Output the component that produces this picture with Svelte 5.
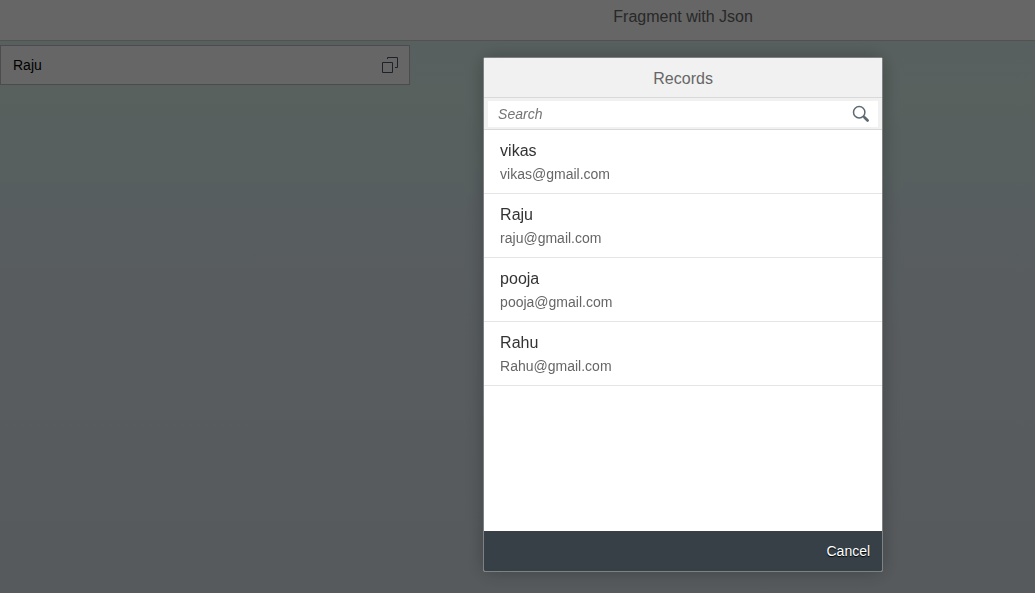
<script>
  let records = [
    { name: 'vikas', email: 'vikas@gmail.com' },
    { name: 'Raju', email: 'raju@gmail.com' },
    { name: 'pooja', email: 'pooja@gmail.com' },
    { name: 'Rahu', email: 'Rahu@gmail.com' }
  ]

  let selected = 'Raju'
  let query = ''
  let open = true

  $: visible = records.filter((r) => r.name.toLowerCase().includes(query.toLowerCase()))

  function pick(record) {
    selected = record.name
    open = false
  }
</script>

<div class="page">
  <header class="bar">
    <h1>Fragment with Json</h1>
  </header>

  <div class="value-help">
    <input type="text" aria-label="Record" bind:value={selected} />
    <button aria-label="Choose record" on:click={() => (open = true)}>
      <svg width="18" height="18" viewBox="0 0 18 18" fill="none" stroke="currentColor">
        <path d="M1.5 6.5h10v10h-10z" />
        <path d="M6.5 3V1.5h10v10H14" />
      </svg>
    </button>
  </div>
</div>

{#if open}
  <div class="scrim">
    <div class="dialog" role="dialog" aria-modal="true" aria-labelledby="dialog-title">
      <h2 id="dialog-title">Records</h2>

      <div class="subheader">
        <div class="search">
          <input type="text" aria-label="Search" placeholder="Search" bind:value={query} />
          <button aria-label="Search">
            <svg width="18" height="18" viewBox="0 0 18 18" fill="none" stroke="currentColor">
              <circle cx="7.2" cy="7.2" r="5.7" stroke-width="1.5" />
              <path d="M11 11l1.5 1.5" stroke-width="1.5" />
              <path d="M12.6 12.6l3 2.8" stroke-width="2.8" stroke-linecap="round" />
            </svg>
          </button>
        </div>
      </div>

      <ul>
        {#each visible as record}
          <li>
            <button class="item" on:click={() => pick(record)}>
              <span class="name">{record.name}</span>
              <span class="email">{record.email}</span>
            </button>
          </li>
        {/each}
      </ul>

      <footer>
        <button on:click={() => (open = false)}>Cancel</button>
      </footer>
    </div>
  </div>
{/if}

<style>
  :global(body) {
    margin: 0;
    font-family: 'Liberation Sans', Arial, sans-serif;
  }
  button,
  input {
    box-sizing: border-box;
    margin: 0;
    padding: 0;
    border: 0;
    background: none;
    font-family: inherit;
    outline: none;
  }
  svg {
    display: block;
  }
  h1,
  h2 {
    margin: 0;
    font-size: 16px;
    font-weight: 400;
    text-align: center;
  }
  .page {
    min-height: 100vh;
    background: linear-gradient(#dcf0f0 0, #dcf2ec 16%, #d9edee 30%, #dce8ee 40%, #d9e1e6 100%);
  }
  .bar {
    padding: 0 0 6px 32%;
    border-bottom: 1px solid #ccc;
    background: #fff;
  }
  .bar h1 {
    line-height: 34px;
    color: #666;
  }
  .value-help {
    box-sizing: border-box;
    display: flex;
    max-width: 410px;
    height: 40px;
    margin-top: 4px;
    border: 1px solid #bfbfbf;
    background: #fff;
  }
  .value-help input {
    flex: 1;
    min-width: 0;
    padding: 0 12px;
    font-size: 14px;
    color: #000;
  }
  .value-help button {
    display: grid;
    place-items: center;
    width: 38px;
    color: #4a5568;
  }
  .scrim {
    position: fixed;
    inset: 0;
    box-sizing: border-box;
    display: flex;
    justify-content: center;
    padding: 57px 0 21px 32%;
    background: rgba(0, 0, 0, 0.6);
  }
  .dialog {
    box-sizing: border-box;
    display: flex;
    flex-direction: column;
    width: 400px;
    border: 1px solid #7d8283;
    border-radius: 2px;
    overflow: hidden;
    background: #fff;
    box-shadow: 0 0 20px rgba(0, 0, 0, 0.25);
  }
  .dialog h2 {
    padding-top: 2px;
    line-height: 37px;
    border-bottom: 1px solid #d9d9d9;
    background: #f1f1f1;
    color: #666;
  }
  .subheader {
    padding: 3px 4px 2px;
    border-bottom: 1px solid #d9d9d9;
    background: #f1f1f1;
  }
  .search {
    display: flex;
    height: 26px;
    background: #fff;
  }
  .search input {
    flex: 1;
    min-width: 0;
    padding: 0 10px;
    font-size: 14px;
    color: #333;
  }
  .search input::placeholder {
    color: #757575;
    font-style: italic;
    opacity: 1;
  }
  .search button {
    display: grid;
    place-items: center;
    width: 34px;
    color: #5c6872;
  }
  ul {
    flex: 1;
    min-height: 0;
    margin: 0;
    padding: 0;
    overflow: auto;
    list-style: none;
  }
  li {
    border-bottom: 1px solid #e5e5e5;
  }
  .item {
    display: flex;
    flex-direction: column;
    width: 100%;
    height: 63px;
    padding: 8px 16px;
    text-align: left;
  }
  .name {
    padding-top: 2px;
    font-size: 16px;
    line-height: 22px;
    color: #333;
  }
  .email {
    font-size: 14px;
    line-height: 24px;
    color: #666;
  }
  footer {
    display: flex;
    justify-content: flex-end;
    height: 40px;
    background: #364046;
  }
  footer button {
    padding: 0 12px;
    font-size: 14px;
    color: #fff;
    text-shadow: 0 1px 1px #000;
  }
</style>
